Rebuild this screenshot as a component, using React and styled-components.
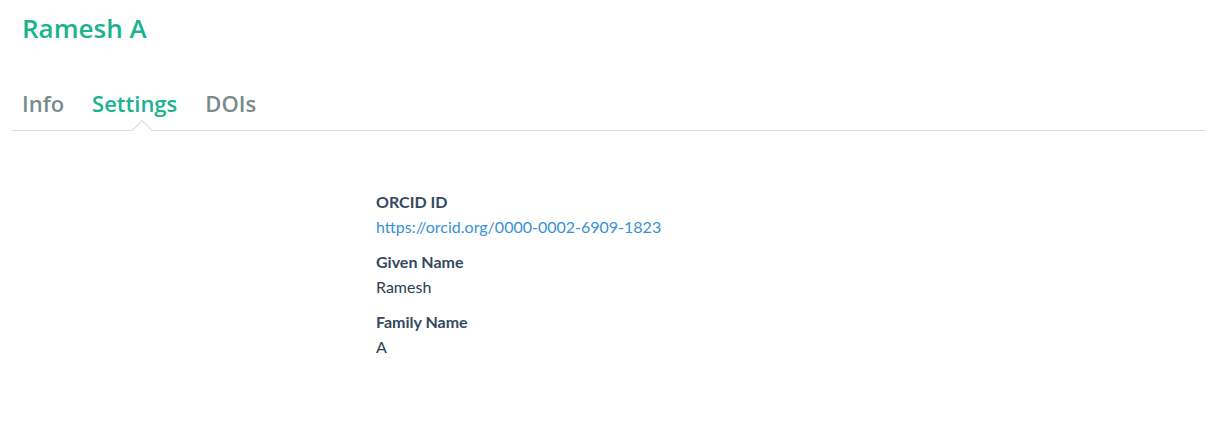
import React from 'react'
import styled, { createGlobalStyle } from 'styled-components'

const GlobalStyle = createGlobalStyle`
body{
    margin:0;
    padding:0;
    background:#fff;
    font-family: Lato, "Open Sans", sans-serif;
    color:#2c3e50;
}
`;

const Page = styled.div`
width:100%;
min-height:428px;
padding-left:12px;
box-sizing:border-box;
`;

const Title = styled.h1`
margin:0;
padding:11px 0 0 10px;
font-family:"Open Sans", sans-serif;
font-size:26px;
line-height:34px;
font-weight:600;
color:#1bb38d;
`;

const Tabs = styled.ul`
list-style:none;
display:flex;
gap:28px;
margin:39px 0 0 0;
padding:5px 0 0 10px;
border-bottom:1px solid #dcdcdc;
height:47px;
box-sizing:border-box;
`;

const Tab = styled.li`
position:relative;
font-family:"Open Sans", sans-serif;
font-size:22px;
line-height:28px;
font-weight:600;
color:${props => props.active ? '#1bb38d' : '#7b8a8b'};
cursor:pointer;

&::after{
    content:"";
    display:${props => props.active ? 'block' : 'none'};
    position:absolute;
    left:calc(50% + 7px);
    top:31px;
    width:14px;
    height:14px;
    background:#fff;
    border-left:1px solid #dcdcdc;
    border-top:1px solid #dcdcdc;
    transform:rotate(45deg);
    transform-origin:0 0;
}
`;

const Content = styled.div`
padding:58px 0 0 364px;
`;

const Field = styled.div`
margin-bottom:10px;
`;

const Label = styled.div`
font-size:16px;
line-height:25px;
font-weight:700;
color:#34495e;
`;

const Value = styled.div`
font-size:16px;
line-height:25px;
color:#2c3e50;

a{
    color:#3891d6;
    text-decoration:none;
}
`;

export default function App() {
    const fields = [
        { label: 'ORCID ID', value: 'https://orcid.org/0000-0002-6909-1823', link: true },
        { label: 'Given Name', value: 'Ramesh' },
        { label: 'Family Name', value: 'A' },
    ];

    return (
        <>
            <GlobalStyle />
            <Page>
                <Title>Ramesh A</Title>
                <Tabs>
                    <Tab>Info</Tab>
                    <Tab active>Settings</Tab>
                    <Tab>DOIs</Tab>
                </Tabs>
                <Content>
                    {fields.map(f => (
                        <Field key={f.label}>
                            <Label>{f.label}</Label>
                            <Value>{f.link ? <a href={f.value}>{f.value}</a> : f.value}</Value>
                        </Field>
                    ))}
                </Content>
            </Page>
        </>
    )
}
